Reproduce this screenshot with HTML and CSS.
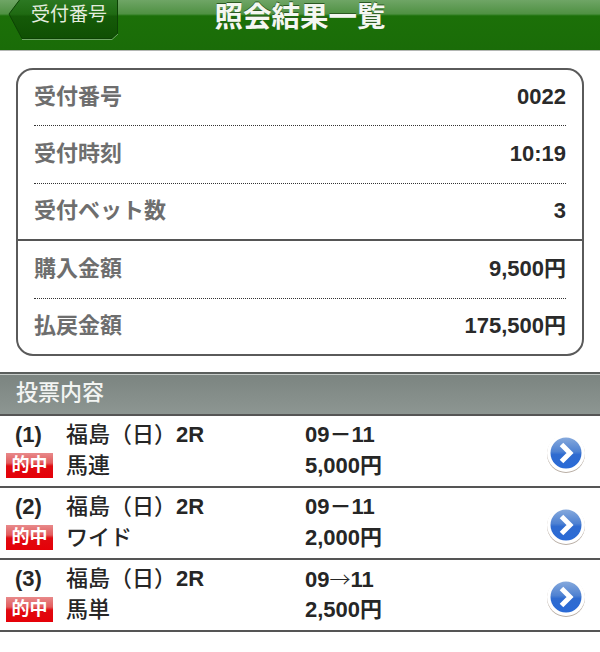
FILE: index.html
```html
<!DOCTYPE html>
<html lang="ja">
<head>
<meta charset="utf-8">
<title>照会結果一覧</title>
<link rel="stylesheet" href="styles.css">
</head>
<body>
<header class="topbar">
  <a class="back">
    <svg class="back-shape" width="112" height="41" viewBox="0 0 112 41"><defs><linearGradient id="bk" x1="0" y1="0" x2="0" y2="1"><stop offset="0" stop-color="#2d7a24"/><stop offset=".4" stop-color="#1f6a12"/><stop offset=".45" stop-color="#155a08"/><stop offset="1" stop-color="#0f5003"/></linearGradient></defs><path d="M13 -2L1 14L14 38.5H104L109.500 33.500V-2Z" fill="url(#bk)" stroke="#0c4204" stroke-width="1"/><path d="M14 39.500H104L110 34" fill="none" stroke="#6ea864" stroke-width="1"/></svg>
    <span class="back-text">受付番号</span>
  </a>
  <h1 class="title">照会結果一覧</h1>
</header>
<section class="card">
  <div class="info dotted"><span class="label">受付番号</span><span class="value">0022</span></div>
  <div class="info dotted"><span class="label">受付時刻</span><span class="value">10:19</span></div>
  <div class="info solid"><span class="label">受付ベット数</span><span class="value">3</span></div>
  <div class="info dotted"><span class="label">購入金額</span><span class="value">9,500円</span></div>
  <div class="info"><span class="label">払戻金額</span><span class="value">175,500円</span></div>
</section>
<h2 class="section-head">投票内容</h2>
<ul class="bets">
  <li class="bet">
    <span class="num">(1)</span><span class="race">福島（日）<b>2R</b></span><span class="combo">09－11</span>
    <span class="hit">的中</span><span class="type">馬連</span><span class="amount">5,000円</span>
    <svg class="go" width="40" height="40" viewBox="0 0 40 40"><use href="#goicon"/></svg>
  </li>
  <li class="bet">
    <span class="num">(2)</span><span class="race">福島（日）<b>2R</b></span><span class="combo">09－11</span>
    <span class="hit">的中</span><span class="type">ワイド</span><span class="amount">2,000円</span>
    <svg class="go" width="40" height="40" viewBox="0 0 40 40"><use href="#goicon"/></svg>
  </li>
  <li class="bet">
    <span class="num">(3)</span><span class="race">福島（日）<b>2R</b></span><span class="combo">09<span class="arrow">→</span>11</span>
    <span class="hit">的中</span><span class="type">馬単</span><span class="amount">2,500円</span>
    <svg class="go" width="40" height="40" viewBox="0 0 40 40"><use href="#goicon"/></svg>
  </li>
</ul>
<svg class="defs" width="0" height="0">
  <defs>
    <linearGradient id="bl" x1="0" y1="0" x2="0" y2="1"><stop offset="0" stop-color="#86a9dc"/><stop offset=".45" stop-color="#4f82d2"/><stop offset=".55" stop-color="#2f6bd0"/><stop offset="1" stop-color="#2a6ad6"/></linearGradient>
    <symbol id="goicon" viewBox="0 0 40 40">
      <circle cx="20" cy="21" r="19" fill="#b9aea5"/>
      <circle cx="20" cy="20" r="19" fill="#fff"/>
      <circle cx="20" cy="20" r="15.500" fill="url(#bl)"/>
      <path d="M15.500 11.500L24 20L15.500 28.500" fill="none" stroke="#fff" stroke-width="5"/>
    </symbol>
  </defs>
</svg>
</body>
</html>
```
FILE: styles.css
```css
* { box-sizing: border-box; }
html, body { margin: 0; padding: 0; }
body {
  width: 600px;
  height: 652px;
  overflow: hidden;
  background: #fff;
  font-family: "Liberation Sans", "Noto Sans CJK JP", sans-serif;
  color: #222;
}
.topbar {
  position: relative;
  height: 51px;
  display: flex;
  justify-content: center;
  background: linear-gradient(#6fa566 0, #4f9142 14px, #2f7f20 15px, #1c7008 16px, #1a6c08 50px);
  border-bottom: 1px solid #b4b7b4;
  overflow: hidden;
}
.back {
  position: absolute;
  left: 8px;
  top: 0;
  width: 112px;
  height: 41px;
  color: #e4ecdf;
  font-size: 19px;
}
.back-shape { display: block; }
.back-text { position: absolute; left: 23px; top: 3px; line-height: 24px; }
.title {
  margin: 0;
  padding-top: 1px;
  font-size: 28.500px;
  font-weight: 700;
  line-height: 32px;
  color: #f4f7f1;
  text-shadow: 0 -1px 0 #2c5a22;
}
.card {
  margin: 17px 16px 0;
  width: 568px;
  height: 288px;
  padding: 0 16px;
  border: 2px solid #5a5a5a;
  border-radius: 17px;
  background: #fff;
}
.info {
  display: flex;
  justify-content: space-between;
  align-items: center;
  height: 57.500px;
}
.info:first-child, .info:last-child { height: 56px; }
.dotted { border-bottom: 1px dotted #333; }
.solid {
  border-bottom: 2px solid #555;
  margin: 0 -16px;
  padding: 0 16px;
}
.label { font-size: 22px; line-height: 26px; font-weight: 700; color: #6e6e6e; padding-bottom: 1px; }
.value { font-size: 22px; line-height: 26px; font-weight: 700; color: #2a2a2a; padding-bottom: 1px; }
.section-head {
  margin: 16px 0 0;
  height: 44px;
  padding: 0 16px;
  font-size: 22px;
  font-weight: 500;
  line-height: 38px;
  color: #f2f4f2;
  background: linear-gradient(#7b8480, #8d9692);
  border-top: 2px solid #5a5e5c;
  border-bottom: 2px solid #555;
  box-shadow: inset 0 1px 0 #c6cbc8;
}
.bets { list-style: none; margin: 0; padding: 0; }
.bet {
  position: relative;
  display: grid;
  grid-template-columns: 60px 239px 1fr;
  grid-template-rows: 31px 31px;
  align-items: center;
  height: 72px;
  padding: 3px 0 0 6px;
  border-bottom: 2px solid #555;
  font-size: 22px;
  line-height: 26px;
  font-weight: 700;
  color: #262626;
}
.num { padding-left: 9px; }
.hit {
  width: 47px;
  height: 25px;
  font-size: 18px;
  line-height: 25px;
  text-align: center;
  color: #fff;
  background: linear-gradient(#e8898a 0, #e25c5d 10px, #e00a10 13px, #e50008 25px);
}
.type, .race { font-weight: 500; }
.arrow {
  font-family: "Noto Sans CJK JP", sans-serif;
  font-size: 21px;
  font-weight: 300;
}
.go { position: absolute; left: 546px; top: 17px; }
.defs { position: absolute; }
```
